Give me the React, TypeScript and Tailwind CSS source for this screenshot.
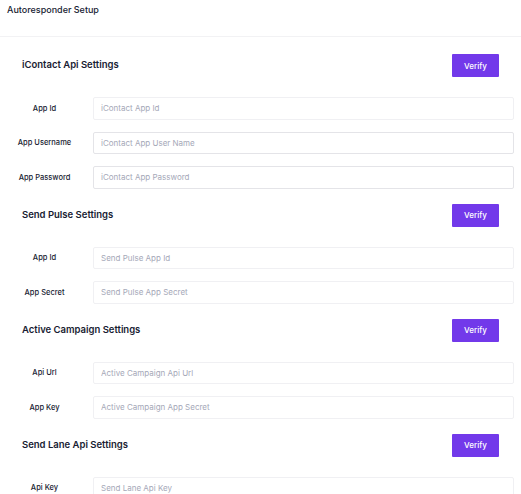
import React from "react";

type Field = {
  label: string;
  placeholder: string;
  faint?: boolean;
};

type Section = {
  title: string;
  fields: Field[];
};

const sections: Section[] = [
  {
    title: "iContact Api Settings",
    fields: [
      { label: "App Id", placeholder: "iContact App Id", faint: true },
      { label: "App Username", placeholder: "iContact App User Name" },
      { label: "App Password", placeholder: "iContact App Password" },
    ],
  },
  {
    title: "Send Pulse Settings",
    fields: [
      { label: "App Id", placeholder: "Send Pulse App Id", faint: true },
      { label: "App Secret", placeholder: "Send Pulse App Secret", faint: true },
    ],
  },
  {
    title: "Active Campaign Settings",
    fields: [
      { label: "Api Url", placeholder: "Active Campaign Api Url", faint: true },
      { label: "App Key", placeholder: "Active Campaign App Secret", faint: true },
    ],
  },
  {
    title: "Send Lane Api Settings",
    fields: [{ label: "Api Key", placeholder: "Send Lane Api Key", faint: true }],
  },
];

const App = () => {
  return (
    <div className="w-[521px] h-[494px] overflow-hidden bg-white font-['Inter','Liberation_Sans',sans-serif] text-[#181c32]">
      {/* Header */}
      <div className="h-[37px] border-b border-[#f2f2f4] px-[7px] pt-[3px]">
        <h2 className="text-[9px] font-medium leading-[13px]">Autoresponder Setup</h2>
      </div>

      <div className="flex flex-col gap-[15px] pt-[17px]">
        {sections.map((s) => (
          <div key={s.title}>
            {/* Section title + verify */}
            <div className="flex h-[23px] items-center justify-between pl-[22px] pr-[22px]">
              <h3 className="text-[9.5px] font-semibold">{s.title}</h3>
              <button className="h-[23px] w-[47px] rounded-[1px] bg-[#7239ea] text-[8px] font-medium text-white">
                Verify
              </button>
            </div>

            {/* Fields */}
            <div className="mt-[20px] flex flex-col gap-[12px]">
              {s.fields.map((f) => (
                <div key={f.label + f.placeholder} className="flex h-[22.5px] items-center">
                  <label className="w-[89px] text-center text-[7.5px] font-medium">{f.label}</label>
                  <input
                    placeholder={f.placeholder}
                    className={`ml-[4px] mr-[7px] h-full flex-1 rounded-[2px] border bg-white pl-[7px] text-[8px] outline-none placeholder:text-[#a5a8b8] ${
                      f.faint ? "border-[#f0f0f3]" : "border-[#e4e4e8]"
                    }`}
                  />
                </div>
              ))}
            </div>
          </div>
        ))}
      </div>
    </div>
  );
};

export default App;
